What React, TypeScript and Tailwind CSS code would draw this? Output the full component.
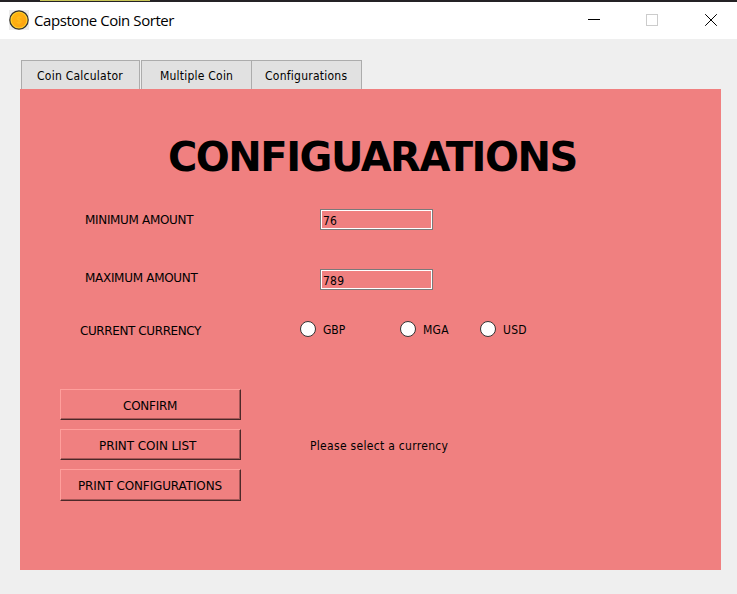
import type { ReactNode } from "react";

function Coin() {
  return (
    <svg width="20" height="20" viewBox="0 0 20 20" className="block shrink-0">
      <defs>
        <linearGradient id="coin" x1="0" y1="0" x2="1" y2="1">
          <stop offset="0" stopColor="#ffb80f" />
          <stop offset="1" stopColor="#fda012" />
        </linearGradient>
      </defs>
      <rect width="20" height="20" fill="#ececec" />
      <circle cx="10" cy="10" r="9.2" fill="#ffd02a" stroke="#33302c" strokeWidth="1.2" />
      <circle cx="10" cy="10" r="7.4" fill="url(#coin)" />
      <path d="M12.2 7.8C11 6.6 8 6.8 8 8.4C8 10.3 12.2 9.6 12.2 11.6C12.2 13.2 9 13.3 7.8 12.2M10 5.8V14.2" fill="none" stroke="#ffc020" strokeWidth="1.2" opacity="0.7" />
    </svg>
  );
}

function TitleBar() {
  return (
    <header className="flex h-[37px] items-start bg-white">
      <div className="flex grow pl-[9px] pt-2">
        <Coin />
        <h1 className="ml-[5px] whitespace-nowrap font-['Open_Sans',sans-serif] text-[15px] leading-5 tracking-[-0.43px]">
          Capstone Coin Sorter
        </h1>
      </div>
      <svg width="149" height="37" viewBox="0 0 149 37" fill="none" shapeRendering="crispEdges" className="block shrink-0">
        <path d="M0 17.5H12" stroke="#000" />
        <rect x="58.5" y="12.5" width="11" height="11" stroke="#ccc" />
        <path d="M117.2 12.2L128.8 23.8M128.8 12.2L117.2 23.8" stroke="#000" strokeWidth="1" shapeRendering="auto" />
      </svg>
    </header>
  );
}

function Tab({ className, children }: { className: string; children: ReactNode }) {
  return (
    <button className={`h-[29px] whitespace-nowrap border border-b-0 border-[#acacac] bg-[#e1e1e1] pt-px text-left leading-4 ${className}`}>
      {children}
    </button>
  );
}

function Field({ label, value, labelClass }: { label: string; value: string; labelClass: string }) {
  return (
    <div className="flex h-[21px] items-start pl-[65px]">
      <span className={`w-[235px] whitespace-nowrap font-['DejaVu_Sans',sans-serif] leading-4 ${labelClass}`}>{label}</span>
      <input
        defaultValue={value}
        className="h-[21px] w-[113px] border border-[#7a7a7a] bg-transparent pl-[2px] pr-0 pt-[3px] leading-4 tracking-[0.2px] shadow-[inset_0_0_0_1px_white] outline-none"
      />
    </div>
  );
}

function Radio({ label, className }: { label: string; className: string }) {
  return (
    <label className={`flex items-start ${className}`}>
      <span className="mr-[7px] size-4 shrink-0 rounded-full border border-[#333] bg-white" />
      <span className="mt-px leading-4">{label}</span>
    </label>
  );
}

function Button({ className, children }: { className: string; children: ReactNode }) {
  return (
    <button className={`w-[181px] whitespace-nowrap border border-b-[#4b2828] border-l-[#ff9f9c] border-r-[#4b2828] border-t-[#ff9f9c] text-left font-['DejaVu_Sans',sans-serif] leading-4 shadow-[inset_-1px_-1px_0_#a65858] ${className}`}>
      {children}
    </button>
  );
}

export default function App() {
  return (
    <div className="h-[594px] w-[737px] overflow-hidden bg-[#efefef] font-['DejaVu_Sans_Condensed','DejaVu_Sans',sans-serif] text-[12px] text-black">
      <div className="flex h-[2px] bg-[#242225] pl-10">
        <div className="h-px w-[110px] bg-[#c9c657]" />
      </div>
      <TitleBar />
      <nav className="flex pl-[21px] pt-[21px]">
        <Tab className="w-[119px] pl-[15px] tracking-[0.25px]">Coin Calculator</Tab>
        <Tab className="ml-px w-[111px] pl-[18px] tracking-[0.22px]">Multiple Coin</Tab>
        <Tab className="-ml-px w-[111px] pl-[13px] tracking-[0.25px]">Configurations</Tab>
      </nav>
      <main className="ml-5 h-[481px] w-[701px] bg-[#f08080] pt-12">
        <h2 className="whitespace-nowrap pl-[148px] font-['DejaVu_Sans',sans-serif] text-[40px] font-bold leading-10 tracking-[-1.5px]">CONFIGUARATIONS</h2>
        <div className="pt-8">
          <Field label="MINIMUM AMOUNT" value="76" labelClass="pt-[3px] tracking-[-0.33px]" />
        </div>
        <div className="pt-[39px]">
          <Field label="MAXIMUM AMOUNT" value="789" labelClass="pt-px tracking-[-0.3px]" />
        </div>
        <div className="flex items-start pl-[60px] pt-[31px]">
          <span className="mt-[2px] w-[220px] whitespace-nowrap font-['DejaVu_Sans',sans-serif] leading-4 tracking-[-0.4px]">CURRENT CURRENCY</span>
          <Radio label="GBP" className="w-[100px]" />
          <Radio label="MGA" className="w-20 tracking-[0.3px]" />
          <Radio label="USD" className="w-20 tracking-[0.3px]" />
        </div>
        <div className="flex pl-10 pt-[50px]">
          <div className="flex flex-col gap-[9px]">
            <Button className="h-[31px] pl-[62px] pt-[2px] tracking-[-0.25px]">CONFIRM</Button>
            <Button className="h-[31px] pl-[38px] pt-[2px] tracking-[-0.08px]">PRINT COIN LIST</Button>
            <Button className="h-8 pl-[17px] pt-px tracking-[-0.13px]">PRINT CONFIGURATIONS</Button>
          </div>
          <p className="ml-[69px] mt-[49px] whitespace-nowrap leading-4 tracking-[0.3px]">Please select a currency</p>
        </div>
      </main>
    </div>
  );
}
